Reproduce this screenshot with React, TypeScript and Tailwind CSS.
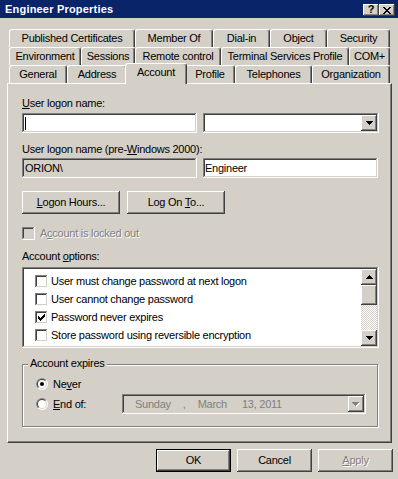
import React from "react";

const raised =
  "shadow-[inset_-1px_-1px_0_#404040,inset_1px_1px_0_#fff,inset_-2px_-2px_0_#808080]";
const sunken =
  "shadow-[inset_-1px_-1px_0_#fff,inset_1px_1px_0_#808080,inset_-2px_-2px_0_#d4d0c8,inset_2px_2px_0_#404040]";
const dis = "text-[#808080] [text-shadow:1px_1px_0_#fff]";

function Down({ c = "#000" }: { c?: string }) {
  return (
    <svg width="7" height="4" viewBox="0 0 7 4" shapeRendering="crispEdges">
      <path d="M0 0h7v1H0zM1 1h5v1H1zM2 2h3v1H2zM3 3h1v1H3z" fill={c} />
    </svg>
  );
}
function Up() {
  return (
    <svg width="7" height="4" viewBox="0 0 7 4" shapeRendering="crispEdges">
      <path d="M3 0h1v1H3zM2 1h3v1H2zM1 2h5v1H1zM0 3h7v1H0z" fill="#000" />
    </svg>
  );
}
function DownDisabled() {
  return (
    <svg width="8" height="5" viewBox="0 0 8 5" shapeRendering="crispEdges">
      <path d="M1 1h7v1H1zM2 2h5v1H2zM3 3h3v1H3zM4 4h1v1H4z" fill="#fff" />
      <path d="M0 0h7v1H0zM1 1h5v1H1zM2 2h3v1H2zM3 3h1v1H3z" fill="#808080" />
    </svg>
  );
}

function CheckBox({ checked = false, disabled = false }: { checked?: boolean; disabled?: boolean }) {
  return (
    <div className={`w-[13px] h-[13px] shrink-0 ${disabled ? "bg-[#d4d0c8]" : "bg-white"} ${sunken}`}>
      {checked && (
        <svg width="13" height="13" viewBox="0 0 13 13" shapeRendering="crispEdges">
          <path
            d="M3 5h1v3H3zM4 6h1v3H4zM5 7h1v3H5zM6 6h1v3H6zM7 5h1v3H7zM8 4h1v3H8zM9 3h1v3H9z"
            fill="#000"
          />
        </svg>
      )}
    </div>
  );
}

function Radio({ on = false }: { on?: boolean }) {
  return (
    <svg width="12" height="12" viewBox="0 0 12 12" className="shrink-0">
      <defs>
        <clipPath id="radio-tl">
          <polygon points="0,0 12,0 0,12" />
        </clipPath>
      </defs>
      <circle cx="6" cy="6" r="6" fill="#fff" />
      <circle cx="6" cy="6" r="6" fill="#808080" clipPath="url(#radio-tl)" />
      <circle cx="6" cy="6" r="5" fill="#d4d0c8" />
      <circle cx="6" cy="6" r="5" fill="#404040" clipPath="url(#radio-tl)" />
      <circle cx="6" cy="6" r="4" fill="#fff" />
      {on && <circle cx="6" cy="6" r="2" fill="#000" />}
    </svg>
  );
}

function Tab({ label, w }: { label: string; w: string }) {
  return (
    <div
      className={`${w} h-[18px] shrink-0 flex items-center justify-center whitespace-nowrap border-t border-l border-white border-r border-r-[#404040] rounded-t-[3px] shadow-[inset_-1px_0_0_#808080]`}
    >
      {label}
    </div>
  );
}

function Btn({ children, w = "w-[75px]", extra = "" }: { children: React.ReactNode; w?: string; extra?: string }) {
  return (
    <div className={`${w} h-[23px] shrink-0 flex items-center justify-center bg-[#d4d0c8] ${raised} ${extra}`}>
      {children}
    </div>
  );
}

export default function App() {
  return (
    <div className="w-[398px] h-[479px] overflow-hidden bg-[#d4d0c8] text-black text-[11px] leading-[13px] tracking-[-0.25px] font-['Liberation_Sans',Arial,sans-serif] select-none">
      {/* Title bar */}
      <div className="h-[18px] bg-[#0a246a] flex justify-between">
        <div className="pl-[5px] self-center text-white font-bold tracking-[0.2px]">Engineer Properties</div>
        <div className="flex mt-[4px] mr-[3px] h-[12px]">
          <div className={`w-[16px] h-[12px] bg-[#d4d0c8] ${raised} flex items-center justify-center font-bold text-[11px] leading-none pb-[1px]`}>
            ?
          </div>
          <div className={`w-[16px] h-[12px] bg-[#d4d0c8] ${raised} flex items-center justify-center`}>
            <svg width="8" height="7" viewBox="0 0 8 7" shapeRendering="crispEdges">
              <path
                d="M0 0h2v1H0zM6 0h2v1H6zM1 1h2v1H1zM5 1h2v1H5zM2 2h4v1H2zM3 3h2v1H3zM2 4h4v1H2zM1 5h2v1H1zM5 5h2v1H5zM0 6h2v1H0zM6 6h2v1H6z"
                fill="#000"
              />
            </svg>
          </div>
        </div>
      </div>

      {/* Tabs */}
      <div className="mt-[11px] ml-[9px] w-[381px] flex">
        <Tab label="Published Certificates" w="w-[126px]" />
        <Tab label="Member Of" w="w-[78px]" />
        <Tab label="Dial-in" w="w-[57px]" />
        <Tab label="Object" w="w-[57px]" />
        <Tab label="Security" w="w-[63px]" />
      </div>
      <div className="ml-[9px] w-[381px] flex">
        <Tab label="Environment" w="w-[72px]" />
        <Tab label="Sessions" w="w-[54px]" />
        <Tab label="Remote control" w="w-[86px]" />
        <Tab label="Terminal Services Profile" w="w-[128px]" />
        <Tab label="COM+" w="w-[41px]" />
      </div>
      <div className="ml-[9px] w-[381px] h-[18px] flex">
        <Tab label="General" w="w-[58px]" />
        <Tab label="Address" w="w-[60px]" />
        <div className="relative z-10 -mx-[2px] -mt-[2px] w-[62px] h-[21px] shrink-0 flex items-center justify-center pb-[4px] bg-[#d4d0c8] border-t border-l border-white border-r border-r-[#404040] rounded-t-[3px] shadow-[inset_-1px_0_0_#808080]">
          Account
        </div>
        <Tab label="Profile" w="w-[50px]" />
        <Tab label="Telephones" w="w-[77px]" />
        <Tab label="Organization" w="w-[78px]" />
      </div>

      {/* Panel */}
      <div className="ml-[7px] w-[385px] h-[360px] border-t border-l border-white border-r border-b border-r-[#404040] border-b-[#404040] shadow-[inset_-1px_-1px_0_#808080] pl-[14px]">
        <div className="mt-[13px] h-[13px]">
          <u>U</u>ser logon name:
        </div>
        <div className="mt-[3px] flex gap-[6px]">
          <div className={`w-[175px] h-[20px] bg-white flex items-center ${sunken}`}>
            <div className="ml-[3px] w-px h-[13px] bg-black" />
          </div>
          <div className={`w-[176px] h-[20px] bg-white flex justify-end p-[2px] ${sunken}`}>
            <div className={`w-[16px] h-[16px] bg-[#d4d0c8] ${raised} flex items-center justify-center`}>
              <Down />
            </div>
          </div>
        </div>

        <div className="mt-[10px] h-[13px] whitespace-nowrap">
          User logon name (pre-<u>W</u>indows 2000):
        </div>
        <div className="mt-[2px] flex gap-[6px]">
          <div className={`w-[175px] h-[20px] bg-[#d4d0c8] flex items-center pl-[3px] ${sunken}`}>ORION\</div>
          <div className={`w-[175px] h-[20px] bg-white flex items-center pl-[2px] ${sunken}`}>Engineer</div>
        </div>

        <div className="mt-[13px] flex gap-[7px]">
          <Btn w="w-[98px]">
            <span>
              <u>L</u>ogon Hours...
            </span>
          </Btn>
          <Btn w="w-[98px]">
            <span>
              Log On <u>T</u>o...
            </span>
          </Btn>
        </div>

        <div className="mt-[13px] h-[13px] flex items-center">
          <CheckBox disabled />
          <span className={`ml-[5px] ${dis}`}>
            A<u>c</u>count is locked out
          </span>
        </div>

        <div className="mt-[10px] h-[13px]">
          Account <u>o</u>ptions:
        </div>

        <div className={`mt-[4px] w-[357px] h-[81px] bg-white flex p-[2px] ${sunken}`}>
          <div className="flex-1 pt-[3px] pl-[11px] overflow-hidden">
            {[
              ["User must change password at next logon", false],
              ["User cannot change password", false],
              ["Password never expires", true],
              ["Store password using reversible encryption", false],
            ].map(([t, c]) => (
              <div key={t as string} className="h-[18px] flex items-center whitespace-nowrap">
                <CheckBox checked={c as boolean} />
                <span className="ml-[3px]">{t as string}</span>
              </div>
            ))}
          </div>
          <div className="w-[16px] flex flex-col">
            <div className={`h-[16px] bg-[#d4d0c8] ${raised} flex items-center justify-center`}>
              <Up />
            </div>
            <div className={`h-[20px] bg-[#d4d0c8] ${raised}`} />
            <div className="flex-1 [background:repeating-conic-gradient(#fff_0_25%,#d4d0c8_0_50%)_0_0/2px_2px]" />
            <div className={`h-[16px] bg-[#d4d0c8] ${raised} flex items-center justify-center`}>
              <Down />
            </div>
          </div>
        </div>

        {/* Account expires group */}
        <div className="mt-[16px] relative w-[356px] h-[63px] border border-[#808080] shadow-[1px_1px_0_#fff,inset_1px_1px_0_#fff] pl-[13px] pt-[13px]">
          <div className="absolute left-[5px] -top-[8px] px-[2px] bg-[#d4d0c8] h-[13px]">Account expires</div>
          <div className="h-[12px] flex items-center">
            <Radio on />
            <span className="ml-[5px]">
              Ne<u>v</u>er
            </span>
          </div>
          <div className="mt-[4px] h-[20px] flex items-center">
            <Radio />
            <span className="ml-[5px] w-[69px]">
              <u>E</u>nd of:
            </span>
            <div className={`w-[244px] h-[20px] bg-[#d4d0c8] flex items-center p-[2px] ${sunken}`}>
              <div className="flex-1 flex items-center pl-[11px] whitespace-pre text-[#808080]">
                <span>Sunday</span>
                <span className="ml-[12px]">,</span>
                <span className="ml-[12px]">March</span>
                <span className="ml-[15px]">13, 2011</span>
              </div>
              <div className={`w-[16px] h-[16px] bg-[#d4d0c8] ${raised} flex items-center justify-center`}>
                <DownDisabled />
              </div>
            </div>
          </div>
        </div>
      </div>

      {/* Bottom buttons */}
      <div className="mt-[6px] pr-[5px] flex justify-end gap-[6px]">
        <div className="w-[75px] h-[23px] border border-black flex items-center justify-center shadow-[inset_-1px_-1px_0_#404040,inset_1px_1px_0_#fff,inset_-2px_-2px_0_#808080]">
          OK
        </div>
        <Btn>Cancel</Btn>
        <Btn>
          <span className={dis}>
            <u>A</u>pply
          </span>
        </Btn>
      </div>
    </div>
  );
}
